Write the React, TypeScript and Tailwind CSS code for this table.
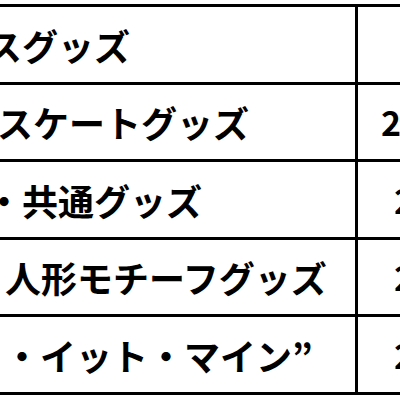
import React from 'react';

// Rows of the goods table; offsets place the text as it sits in the cropped view
interface GoodsRow {
  name: string;
  nameOffset: string;
  price: string;
  priceOffset: string;
}

const ROWS: GoodsRow[] = [
  { name: 'スグッズ', nameOffset: 'ml-[-14px]', price: '', priceOffset: 'ml-[24px]' },
  { name: 'スケートグッズ', nameOffset: 'ml-[-3px]', price: '2', priceOffset: 'ml-[23px]' },
  { name: '・共通グッズ', nameOffset: 'ml-[-14px]', price: '2', priceOffset: 'ml-[36px]' },
  { name: '人形モチーフグッズ', nameOffset: 'ml-[5px]', price: '2', priceOffset: 'ml-[36px]' },
  { name: '・イット・マイン”', nameOffset: 'ml-[4px]', price: '2', priceOffset: 'ml-[36px]' },
];

const HEIGHTS = ['h-[78px]', 'h-[77px]', 'h-[78px]', 'h-[77px]', 'h-[78px]'];

export default function App() {
  return (
    <div
      className="w-[400px] h-[400px] overflow-hidden bg-white pt-[4px] text-black"
      style={{ fontFamily: '"Noto Sans CJK JP", "Noto Sans", sans-serif' }}
    >
      <div className="w-[460px] border-t-[3px] border-black">
        {ROWS.map((row, i) => (
          <div key={i} className={`flex ${HEIGHTS[i]} border-b-[3px] border-black`}>
            <div className="w-[355px] shrink-0 flex items-center overflow-hidden">
              <span className={`${row.nameOffset} whitespace-nowrap text-[36px] leading-none font-bold`}>
                {row.name}
              </span>
            </div>
            <div className="w-[3px] shrink-0 bg-black" />
            <div className="flex-1 flex items-center overflow-hidden">
              <span className={`${row.priceOffset} whitespace-nowrap text-[34px] leading-none font-bold`}>
                {row.price}
              </span>
            </div>
          </div>
        ))}
      </div>
    </div>
  );
}
